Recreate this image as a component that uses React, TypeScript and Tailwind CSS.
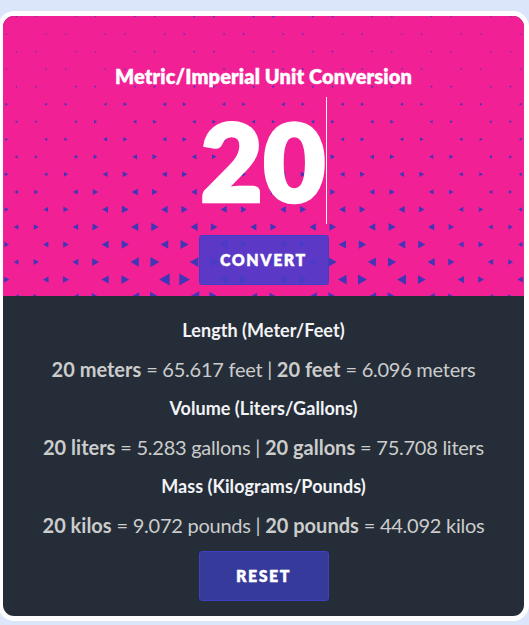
import React from "react";

// Triangle heights for each row of the halftone backdrop, left to right.
const rows: number[][] = [
  [1.3, 1.1, 1.1, 1.1, 1.5, 1.4, 1.8, 1.9, 1.9, 2, 1.9, 1.9, 1.6, 1.4, 1.3, 1.2, 1.1, 1.1],
  [1.1, 1.2, 1.2, 1.3, 1.4, 1.5, 1.8, 1.6, 1.9, 1.7, 1.8, 1.5, 1.5, 1.2, 1.4, 1.2, 1.2, 1.2],
  [1.5, 1.5, 1.3, 1.3, 1.5, 1.8, 1.8, 1.8, 1.7, 1.8, 1.8, 1.8, 1.6, 1.5, 1.3, 1.3, 1.2, 1.4],
  [1.2, 1.4, 1.5, 1.5, 1.6, 1.8, 1.9, 1.9, 2, 1.9, 2, 1.8, 1.7, 1.6, 1.5, 1.5, 1.3, 1.3],
  [1.6, 1.6, 1.8, 1.9, 2, 2.1, 2.2, 2.3, 2.3, 2.2, 2.1, 2, 2.1, 1.9, 1.8, 1.8, 1.6, 1.7],
  [1.9, 1.8, 2, 2.3, 3, 3, 2.9, 2.8, 2.8, 2.9, 2.7, 2.5, 2.6, 2.4, 2.1, 2, 1.8, 1.7],
  [1.7, 1.7, 2.1, 2.6, 2.9, 3.2, 3, 3, 2.8, 2.7, 2.8, 2.8, 2.8, 2.8, 2.3, 2.2, 1.9, 1.9],
  [2.1, 2.2, 2.5, 3.5, 3.6, 3.6, 3.8, 3.4, 3.2, 3, 3, 3.1, 3.2, 3, 3.1, 2.6, 2.3, 2],
  [2.2, 2.3, 3, 3.5, 4.3, 4.4, 4.2, 4, 3.5, 3.4, 3.8, 4, 3.8, 4, 3.4, 3.3, 2.4, 2.3],
  [3, 2.9, 3.7, 4.5, 5, 4.9, 5, 4.3, 4, 4, 4.4, 4.3, 4.5, 4.3, 4.5, 3.5, 3, 2.5],
  [3, 3.5, 4.2, 5, 6, 5.4, 5.2, 5, 4.8, 4.8, 5, 5, 4.8, 4.9, 4.2, 4, 3, 2.9],
  [3.5, 4, 4.8, 5.6, 6.8, 6.4, 6.2, 5.8, 5.4, 5.4, 5.8, 5.7, 5.7, 6, 5.3, 4.3, 4, 3.2],
  [4, 4.5, 5.2, 6, 7, 7.3, 7, 6.5, 6, 6, 6.3, 6.5, 6.6, 7, 6, 5, 4, 4],
  [4.3, 4.8, 5.4, 6.8, 7.3, 7.6, 8.2, 7, 6, 6, 6.6, 7.2, 7.4, 7.1, 7, 5.2, 4.8, 4],
  [4.3, 5, 5.8, 6.8, 8.4, 9.2, 8.8, 7.5, 6.5, 6.5, 7, 8, 8, 8.2, 7, 6, 5, 4.5],
  [5, 5.2, 5.8, 7.2, 7.8, 11, 11, 7.7, 7.8, 7, 7.8, 8.8, 9.2, 9.2, 7.8, 6.2, 5.5, 5],
  [5, 5.5, 6.2, 7.4, 9, 10, 11, 10, 7.6, 8, 8.6, 9, 8.8, 9, 7.5, 6.5, 5.2, 5],
];

// Odd rows start with the right-pointing half of a pair cut off by the left edge.
function Backdrop() {
  return (
    <svg className="absolute inset-0 h-full w-full" viewBox="3 16 521 280" aria-hidden="true">
      {rows.map((sizes, k) =>
        sizes.map((size, i) => {
          const h = size + (k > 4 ? 1 : 0.4);
          const even = k % 2 === 0;
          const pointsLeft = even ? i % 2 === 0 : i % 2 === 1;
          const x = even
            ? 16.1 + Math.floor(i / 2) * 59.3 + (pointsLeft ? 0 : 20.2)
            : -13.5 + Math.floor((i + 1) / 2) * 59.3 + (pointsLeft ? 0 : 20.2);
          const y = 16.5 + 17.54 * k;
          const d = (pointsLeft ? -1 : 1) * h * 0.44;
          return (
            <polygon
              key={k + "-" + i}
              points={`${x + d},${y} ${x - d},${y - h / 2} ${x - d},${y + h / 2}`}
              fill="#3a37b8"
              fillOpacity={0.96}
            />
          );
        })
      )}
    </svg>
  );
}

const results = [
  { title: "Length (Meter/Feet)", a: "20 meters", av: "65.617 feet", b: "20 feet", bv: "6.096 meters" },
  { title: "Volume (Liters/Gallons)", a: "20 liters", av: "5.283 gallons", b: "20 gallons", bv: "75.708 liters" },
  { title: "Mass (Kilograms/Pounds)", a: "20 kilos", av: "9.072 pounds", b: "20 pounds", bv: "44.092 kilos" },
];

export default function App() {
  return (
    <div className="h-[625px] w-[529px] overflow-hidden bg-[#dce6fb] pt-[11px] font-['Lato',sans-serif]">
      <main className="-ml-[2px] h-[610px] w-[531px] overflow-hidden rounded-[16px] border-[5px] border-white bg-[#252e38]">
        <section className="relative h-[280px] bg-[#f12195]">
          <Backdrop />
          <div className="relative flex flex-col items-center pt-[45px]">
            <h1 className="text-[20px] leading-[30px] font-extrabold tracking-[0.12px] whitespace-nowrap text-white [-webkit-text-stroke:0.3px_white]">Metric/Imperial Unit Conversion</h1>
            <div className="mt-[6px] flex h-[127px] items-center">
              <span className="text-[108px] leading-[127px] font-extrabold text-white [-webkit-text-stroke:2.4px_white]">20</span>
              <span className="h-[127px] w-px bg-white" />
            </div>
            <button className="mt-[11px] h-[50px] w-[130px] rounded-[3px] border border-[#3c40c6] bg-[#4a3bca]/90 text-[16px] font-extrabold tracking-[1.5px] text-white [-webkit-text-stroke:0.3px_white]">CONVERT</button>
          </div>
        </section>
        <section className="flex flex-col items-center pt-[19px]">
          {results.map((r) => (
            <div key={r.title} className="flex h-[78px] flex-col items-center whitespace-nowrap">
              <h2 className="text-[18px] leading-[30px] font-bold tracking-[0.05px] text-[#f3f3f7]">{r.title}</h2>
              <p className="mt-[9px] text-[20px] leading-[30px] tracking-[-0.25px] text-[#cccccc]">
                <strong className="font-bold tracking-normal">{r.a}</strong> = {r.av} | <strong className="font-bold tracking-normal">{r.b}</strong> = {r.bv}
              </p>
            </div>
          ))}
          <button className="mt-[2px] h-[50px] w-[130px] rounded-[3px] border border-[#3c40c6] bg-[#3c40c6]/70 text-[16px] font-extrabold tracking-[1.5px] text-white [-webkit-text-stroke:0.3px_white]">RESET</button>
        </section>
      </main>
    </div>
  );
}
